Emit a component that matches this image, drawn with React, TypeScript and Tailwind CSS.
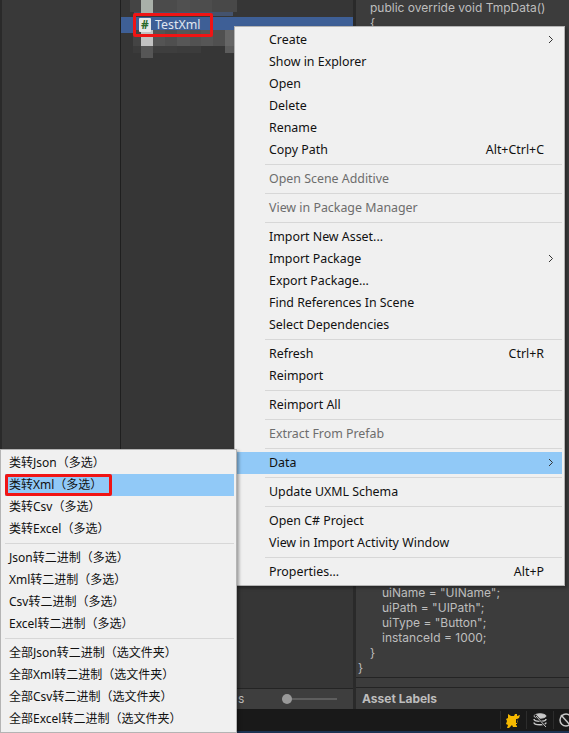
const font = { fontFamily: '"Noto Sans", "Noto Sans CJK SC", sans-serif' };

type Row = { label: string; shortcut?: string; arrow?: boolean; disabled?: boolean; active?: boolean } | null;

const mainMenu: Row[] = [
  { label: 'Create', arrow: true },
  { label: 'Show in Explorer' },
  { label: 'Open' },
  { label: 'Delete' },
  { label: 'Rename' },
  { label: 'Copy Path', shortcut: 'Alt+Ctrl+C' },
  null,
  { label: 'Open Scene Additive', disabled: true },
  null,
  { label: 'View in Package Manager', disabled: true },
  null,
  { label: 'Import New Asset...' },
  { label: 'Import Package', arrow: true },
  { label: 'Export Package...' },
  { label: 'Find References In Scene' },
  { label: 'Select Dependencies' },
  null,
  { label: 'Refresh', shortcut: 'Ctrl+R' },
  { label: 'Reimport' },
  null,
  { label: 'Reimport All' },
  null,
  { label: 'Extract From Prefab', disabled: true },
  null,
  { label: 'Data', arrow: true, active: true },
  null,
  { label: 'Update UXML Schema' },
  null,
  { label: 'Open C# Project' },
  { label: 'View in Import Activity Window' },
  null,
  { label: 'Properties...', shortcut: 'Alt+P' },
];

const subMenu: Row[] = [
  { label: '类转Json（多选）' },
  { label: '类转Xml（多选）', active: true },
  { label: '类转Csv（多选）' },
  { label: '类转Excel（多选）' },
  null,
  { label: 'Json转二进制（多选）' },
  { label: 'Xml转二进制（多选）' },
  { label: 'Csv转二进制（多选）' },
  { label: 'Excel转二进制（多选）' },
  null,
  { label: '全部Json转二进制（选文件夹）' },
  { label: '全部Xml转二进制（选文件夹）' },
  { label: '全部Csv转二进制（选文件夹）' },
  { label: '全部Excel转二进制（选文件夹）' },
];

function Chevron() {
  return (
    <svg width="6" height="9" viewBox="0 0 6 9" fill="none" className="absolute right-[8px] top-[6px]">
      <path d="M1 1l3.5 3.5L1 8" stroke="#333" strokeWidth="1" />
    </svg>
  );
}

// the two pixelated (blurred out) rows above and below the selected asset
function Mosaic() {
  const cells: [number, number, number, number, string][] = [
    [130, 0, 11, 12, '#444444'],
    [141, 0, 12, 15, '#a9b0a9'],
    [153, 0, 24, 12, '#4b4b4b'],
    [177, 0, 13, 12, '#505050'],
    [190, 0, 22, 12, '#4d4d4d'],
    [212, 0, 25, 12, '#484848'],
    [134, 12, 7, 4, '#3f4c63'],
    [153, 12, 80, 4, '#44536e'],
    [133, 30, 8, 16, '#444444'],
    [141, 30, 12, 16, '#c2c2c2'],
    [153, 30, 12, 16, '#545454'],
    [165, 30, 12, 16, '#4f4f4f'],
    [177, 30, 13, 16, '#575757'],
    [190, 30, 11, 16, '#525252'],
    [201, 30, 12, 16, '#565656'],
    [213, 30, 12, 16, '#505050'],
    [225, 30, 11, 16, '#666666'],
    [133, 46, 8, 7, '#3b3b3b'],
    [141, 46, 12, 12, '#565656'],
    [153, 46, 24, 7, '#3e3e3e'],
    [177, 46, 24, 7, '#3c3c3c'],
    [225, 46, 9, 7, '#5c5c5c'],
  ];
  return (
    <svg width="125" height="62" viewBox="120 0 125 62" className="absolute left-[120px] top-0">
      {cells.map(([x, y, w, h, c], i) => (
        <rect key={i} x={x} y={y} width={w} height={h} fill={c} />
      ))}
    </svg>
  );
}

function Menu({ rows, className, pad, line }: { rows: Row[]; className: string; pad: string; line: string }) {
  return (
    <div className={`absolute border border-[#b4b4b4] bg-[#f0f0f0] py-[2px] pr-[2px] text-[#111] shadow-[2px_2px_3px_rgba(0,0,0,0.35)] ${className}`} style={font}>
      {rows.map((row, i) =>
        row === null ? (
          <div key={i} className="flex h-[7px] items-center">
            <div className={`h-px flex-1 bg-[#d7d7d7] ${line}`} />
          </div>
        ) : (
          <div key={i} className={`relative flex h-[22px] items-center ${pad} ${row.active ? 'bg-[#91c9f7]' : ''} ${row.disabled ? 'text-[#6d6d6d]' : ''}`}>
            <span className="whitespace-nowrap">{row.label}</span>
            {row.shortcut && <span className="absolute right-[18px]">{row.shortcut}</span>}
            {row.arrow && <Chevron />}
          </div>
        )
      )}
    </div>
  );
}

export default function App() {
  return (
    <div className="relative flex h-[733px] w-[569px] flex-col overflow-hidden bg-[#191919]">
      <div className="flex h-[709px]">
        <div className="w-[121px] border-x-2 border-r-[1px] border-l-[#2a2a2a] border-r-[#1f1f1f] bg-[#393939]" />
        <div className="flex w-[232px] flex-col bg-[#363636]">
          <div className="mt-[17px] h-4 bg-[#3e5f96]" />
          <div className="flex-1" />
          <div className="flex h-[21px] items-center border-t border-[#242424] bg-[#3e3e3e] pl-[117px]">
            <span className="text-xs text-[#bdbdbd]" style={{ fontFamily: 'Inter' }}>s</span>
            <div className="relative ml-[38px] h-[2px] w-[55px] bg-[#5e5e5e]">
              <div className="absolute top-[-4px] left-0 h-[10px] w-[10px] rounded-full bg-[#999]" />
            </div>
          </div>
        </div>
        <div className="flex flex-1 flex-col border-l-[3px] border-[#2a2a2a] bg-[#3c3c3c] text-xs leading-[15px] text-[#bebebe]" style={{ fontFamily: 'Inter, sans-serif' }}>
          <div className="pl-[14px]">
            <p>public override void TmpData()</p>
            <p>{'{'}</p>
          </div>
          <div className="flex-1" />
          <div className="pl-[2px]">
            <p className="pl-6">uiName = "UIName";</p>
            <p className="pl-6">uiPath = "UIPath";</p>
            <p className="pl-6">uiType = "Button";</p>
            <p className="pl-6">instanceId = 1000;</p>
            <p className="pl-3">{'}'}</p>
            <p>{'}'}</p>
          </div>
          <div className="mt-[2px] h-[11px] border-y border-[#242424]" />
          <div className="flex h-[21px] items-center pl-[6px] font-bold text-[#bdbdbd]">Asset Labels</div>
        </div>
      </div>
      <div className="relative h-[22px] bg-[#191919]">
        <div className="absolute left-[500px] top-[2px] h-[18px] w-px bg-[#2c2c2c]" />
        <div className="absolute left-[526px] top-[2px] h-[18px] w-px bg-[#2c2c2c]" />
        <div className="absolute left-[553px] top-[2px] h-[18px] w-px bg-[#2c2c2c]" />
        <svg width="14" height="15" viewBox="0 0 14 15" className="absolute left-[506px] top-[4px]">
          <path d="M2 1l3 2 3 0 1-2 2 0 0 2 3-1-1 3-2 1 1 3-1 1 0 4-4 0-1-2-3 3-2 0 1-3-2-1 1-3-1-2 2-1z" fill="#f5b800" />
          <path d="M10 6h1.5v4H10zM10 11h1.5v1.5H10z" fill="#191919" />
        </svg>
        <svg width="14" height="15" viewBox="0 0 14 15" className="absolute left-[533px] top-[4px]" fill="none" stroke="#c8c8c8">
          <ellipse cx="7" cy="3" rx="6" ry="2.2" fill="#c8c8c8" />
          <path d="M1 6c0 3 12 3 12 0M1 9.5c0 3 12 3 12 0" strokeWidth="1.5" />
          <path d="M2 2l11 12" stroke="#191919" strokeWidth="2" />
          <path d="M3 3l10 11" strokeWidth="1" />
        </svg>
        <svg width="13" height="15" viewBox="0 0 13 15" className="absolute left-[559px] top-[4px]" fill="none" stroke="#c8c8c8" strokeWidth="1.5">
          <circle cx="7" cy="7" r="6" />
          <path d="M2 2l10 11" />
        </svg>
      </div>
      <div className="h-[2px] bg-[#1c3352]" />

      <Mosaic />

      <div className="absolute left-[133px] top-[13px] flex h-[24px] w-[80px] items-center rounded-[2px] border-[3px] border-[#f01414] pl-[3px] text-[12.4px] text-[#e0e6f0]" style={font}>
        <span className="mr-[4px] flex h-[14px] w-[12px] items-center justify-center rounded-[1px] bg-[#e8e8e8] text-[12px] font-bold leading-none text-[#2a6a2a]">#</span>
        TestXml
      </div>

      <Menu rows={mainMenu} className="left-[234px] top-[26px] w-[331px] text-[12.4px]" pad="pl-[34px]" line="ml-[30px]" />
      <Menu rows={subMenu} className="left-0 top-[449px] w-[237px] pl-[4px] text-[12px]" pad="pl-[4px]" line="" />

      <div className="absolute left-[5px] top-[474px] h-[22px] w-[107px] rounded-[2px] border-[3px] border-[#f01414]" />
    </div>
  );
}
